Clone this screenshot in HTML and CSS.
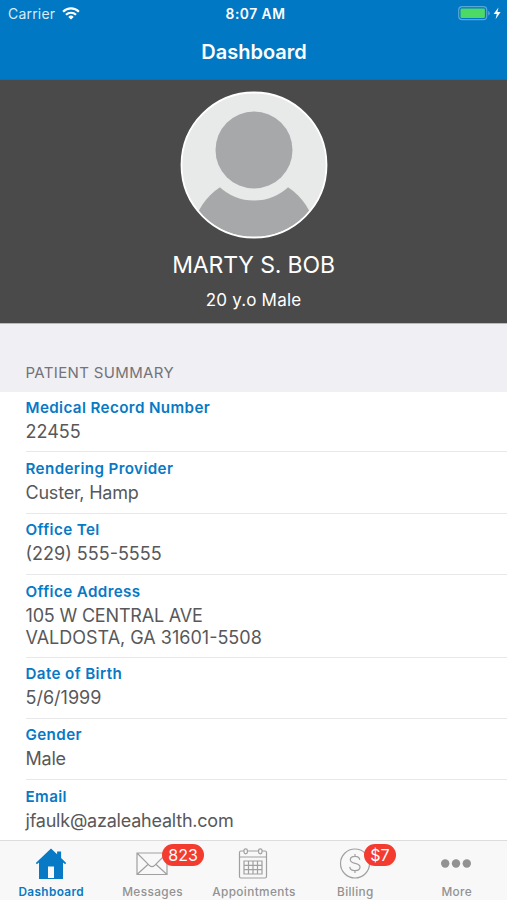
FILE: index.html
```html
<!DOCTYPE html>
<html lang="en">
<head>
<meta charset="utf-8">
<meta name="viewport" content="width=device-width, initial-scale=1">
<title>Dashboard</title>
<link rel="stylesheet" href="styles.css">
</head>
<body>
<div class="app">
  <header class="header">
    <div class="status">
      <div class="status-left"><span class="carrier">Carrier</span>
        <svg class="wifi" width="18" height="13" viewBox="0 0 18 13" fill="none" stroke="#fff" stroke-width="2.2"><path d="M1.100 4.700a11.200 11.200 0 0 1 15.800 0M4 7.800a7.100 7.100 0 0 1 10 0"/><path d="M9 12.600 6.300 9.900a3.800 3.800 0 0 1 5.400 0z" fill="#fff" stroke="none"/></svg>
      </div>
      <span class="time">8:07 AM</span>
      <div class="status-right">
        <svg width="45" height="15" viewBox="0 0 45 15"><rect x=".7" y=".7" width="28" height="13" rx="3.400" fill="none" stroke="#5aa5da" stroke-width="1.200"/><rect x="2.500" y="2.500" width="24.400" height="9.400" rx="1.200" fill="#4cd964"/><path d="M30.200 5a2.400 2.400 0 0 1 0 4.500z" fill="#5aa5da"/><path d="M40.500 1.500 35.600 8h3.200l-1.200 5.300L42.600 6h-3.200z" fill="#fff"/></svg>
      </div>
    </div>
    <h1 class="title">Dashboard</h1>
  </header>
  <section class="profile">
    <svg class="avatar" width="148" height="148" viewBox="0 0 148 148"><defs><clipPath id="disc"><circle cx="74" cy="74" r="72"/></clipPath></defs><circle cx="74" cy="74" r="72.700" fill="#e8e9e9"/><g clip-path="url(#disc)"><circle cx="74" cy="148" r="62" fill="#a6a8a9"/><circle cx="74" cy="59" r="50.500" fill="#e8e9e9"/></g><circle cx="74" cy="59" r="38.500" fill="#a6a8a9"/><circle cx="74" cy="74" r="72.500" fill="none" stroke="#fff" stroke-width="1.800"/></svg>
    <div class="name">MARTY S. BOB</div>
    <div class="age">20 y.o Male</div>
  </section>
  <h2 class="section-title">PATIENT SUMMARY</h2>
  <main class="rows">
    <div class="row"><div class="label">Medical Record Number</div><div class="value">22455</div></div>
    <div class="row"><div class="label">Rendering Provider</div><div class="value text">Custer, Hamp</div></div>
    <div class="row"><div class="label">Office Tel</div><div class="value">(229) 555-5555</div></div>
    <div class="row address"><div class="label">Office Address</div><div class="value"><span class="street">105 W CENTRAL AVE</span><br>VALDOSTA, GA 31601-5508</div></div>
    <div class="row"><div class="label">Date of Birth</div><div class="value">5/6/1999</div></div>
    <div class="row"><div class="label">Gender</div><div class="value text">Male</div></div>
    <div class="row"><div class="label">Email</div><div class="value text">jfaulk@azaleahealth.com</div></div>
  </main>
  <nav class="tabs">
    <div class="tab active">
      <div class="icon"><svg width="32" height="32" viewBox="0 0 32 32" fill="#0779c5" fill-rule="evenodd"><path d="M16 .5.800 15l1 1.200L4 14.400V31h24V14.400l2.200 1.800 1-1.200-5.100-4.900V3.600h-4v2.700zM13 18.500h6V30h-6z"/></svg></div>
      <span>Dashboard</span>
    </div>
    <div class="tab">
      <div class="icon"><svg width="32" height="32" viewBox="0 0 32 32" fill="none" stroke="#a0a0a0" stroke-width="1.200"><path d="M1 5h30v21.500H1zM1 5l12.300 12.300q2.700 2.700 5.400 0L31 5M1 26.500l11.200-10.300M31 26.500 19.800 16.200"/></svg><b class="badge">823</b></div>
      <span>Messages</span>
    </div>
    <div class="tab">
      <div class="icon"><svg width="32" height="32" viewBox="0 0 32 32" fill="none" stroke="#a0a0a0" stroke-width="1.200"><rect x="2.500" y="3" width="27" height="27" rx="1.500"/><path d="M2.500 9h27M7 13h18v13H7zM11.500 13v13M16 13v13M20.500 13v13M7 17.300h18M7 21.700h18"/><g fill="#f8f8f8"><rect x="7" y=".8" width="3.400" height="5" rx="1.700"/><rect x="21.600" y=".8" width="3.400" height="5" rx="1.700"/></g></svg></div>
      <span>Appointments</span>
    </div>
    <div class="tab">
      <div class="icon"><svg width="32" height="32" viewBox="0 0 32 32" fill="none" stroke="#a0a0a0" stroke-width="1.200"><circle cx="16" cy="15.500" r="14.500"/><path d="M20.800 11.800c-.3-2.300-2.100-3.500-4.800-3.500s-4.700 1.300-4.700 3.500c0 5 9.700 2.200 9.700 7.300 0 2.200-2 3.600-5 3.600s-5-1.300-5.200-3.800M16 6v2.300M16 22.700V25"/></svg><b class="badge money">$7</b></div>
      <span>Billing</span>
    </div>
    <div class="tab">
      <div class="icon"><svg width="32" height="32" viewBox="0 0 32 32" fill="#929292"><circle cx="5.200" cy="15.500" r="4.200"/><circle cx="16" cy="15.500" r="4.200"/><circle cx="26.800" cy="15.500" r="4.200"/></svg></div>
      <span>More</span>
    </div>
  </nav>
</div>
</body>
</html>
```
FILE: styles.css
```css
* { box-sizing: border-box; }
body { margin: 0; font-family: Inter, "Liberation Sans", sans-serif; background: #fff; }
.app { width: 507px; height: 900px; display: flex; flex-direction: column; overflow: hidden; }
.header { height: 80px; flex: none; background: #0078c3; color: #fff; border-bottom: 1px solid #316681; }
.status { height: 27px; display: grid; grid-template-columns: 1fr auto 1fr; align-items: center; padding: 0 4px 0 8px; }
.status-left { display: flex; align-items: center; gap: 7px; }
.carrier { font-size: 14px; letter-spacing: .2px; color: #d8ebf7; }
.time { font-size: 13.800px; font-weight: 600; letter-spacing: .5px; }
.status-right { display: flex; justify-content: flex-end; }
.title { margin: 13px 0 0; padding-left: 1px; font-size: 20px; line-height: 24px; font-weight: 600; text-align: center; }
.profile { height: 243px; flex: none; background: #4a4a4a; color: #fff; display: flex; flex-direction: column; align-items: center; padding-top: 11px; }
.avatar { display: block; }
.name { margin-top: 11px; font-size: 23px; line-height: 30px; letter-spacing: -.15px; }
.age { margin-top: 8px; font-size: 17px; line-height: 24px; letter-spacing: .2px; }
.section-title { height: 69px; flex: none; margin: 0; padding: 39px 0 0 25.500px; background: #efeff4; color: #737378; font-size: 15px; line-height: 20px; letter-spacing: .35px; font-weight: 400; border-top: 1px solid #b9b9bb; }
.rows { height: 448px; flex: none; background: #fff; }
.row { height: 61.200px; margin-left: 26px; padding-top: 5.400px; border-bottom: 1px solid #e8e8ea; }
.row:first-child { height: 60.400px; padding-top: 5px; }
.row:last-child { border-bottom: 0; }
.row.address { height: 83px; padding-top: 6.400px; }
.label { color: #0779c5; font-size: 15.200px; line-height: 22px; font-weight: 600; letter-spacing: .38px; margin-left: -.5px; }
.value { color: #58585a; font-size: 18px; line-height: 21.500px; margin-top: 2px; margin-left: -.5px; }
.value.text { letter-spacing: -.22px; }
.street { letter-spacing: -.18px; }
.tabs { height: 60px; flex: none; display: grid; grid-template-columns: repeat(5, 1fr); background: #f8f8f8; border-top: 1px solid #dcdcdd; }
.tab { display: flex; flex-direction: column; align-items: center; color: #929292; font-size: 11.800px; line-height: 16px; letter-spacing: .38px; font-weight: 500; padding-top: 7px; }
.tab.active { color: #0779c5; font-weight: 600; }
.tab > span { padding-left: 1px; }
.icon { position: relative; width: 32px; height: 32px; margin-bottom: 4px; }
.icon svg { display: block; }
.badge { position: absolute; left: 26px; top: -4px; width: 42px; height: 22px; border-radius: 11px; background: #f33b30; color: #fff; font-size: 16px; letter-spacing: 0; font-weight: 400; line-height: 22px; text-align: center; }
.badge.money { left: 25px; width: 32px; }
```
